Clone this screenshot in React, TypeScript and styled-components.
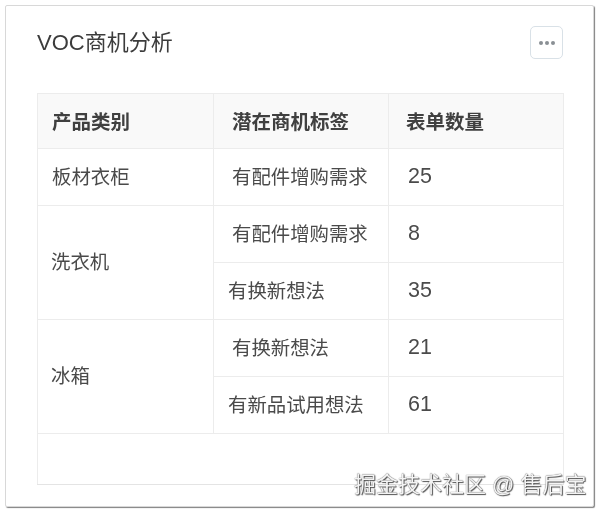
import React from "react";
import styled, { createGlobalStyle } from "styled-components";

const Global = createGlobalStyle`
  html, body { margin: 0; padding: 0; background: #fff; }
  body { width: 601px; height: 513px; overflow: hidden; font-family: "Liberation Sans", "Noto Sans CJK SC", sans-serif; }
`;

const Page = styled.div`
  position: relative;
  width: 601px;
  height: 513px;
  padding: 5px 6px 6px 5px;
  box-sizing: border-box;
  filter: blur(0.35px);
`;

const Card = styled.section`
  width: 589px;
  height: 502px;
  box-sizing: border-box;
  background: #fff;
  border: 1px solid #d8d8d8;
  border-radius: 2px;
  box-shadow: 1px 1px 1px #808080;
  padding: 20px 30px 0 31px;
  display: flex;
  flex-direction: column;
`;

const Header = styled.header`
  display: flex;
  justify-content: space-between;
  align-items: flex-start;
  height: 67px;
`;

const Title = styled.h2`
  margin: 1px 0 0;
  font-size: 22px;
  line-height: 32px;
  font-weight: 400;
  color: #3c3c3c;
`;

const MoreButton = styled.button`
  width: 33px;
  height: 33px;
  padding: 0;
  box-sizing: border-box;
  background: #fff;
  border: 1px solid #d9e1e7;
  border-radius: 5px;
  display: flex;
  align-items: center;
  justify-content: center;
`;

const Table = styled.table`
  width: 526px;
  height: 391px;
  border-collapse: collapse;
  table-layout: fixed;
`;

const HeadCell = styled.th<{ $pad: number }>`
  height: 55px;
  padding: 0 0 2px ${(p) => p.$pad}px;
  box-sizing: border-box;
  text-align: left;
  font-size: 19.5px;
  font-weight: 700;
  color: #404040;
  background: #f9f9f9;
  border: 1px solid #ececec;
`;

const Cell = styled.td<{ $pad: number }>`
  height: 57px;
  padding: 0 0 4px ${(p) => p.$pad}px;
  box-sizing: border-box;
  font-size: 19.4px;
  color: #4a4a4a;
  border: 1px solid #ececec;
`;

const CountCell = styled.td`
  height: 57px;
  padding: 0 0 2px 19px;
  box-sizing: border-box;
  font-size: 21.5px;
  color: #4a4a4a;
  border: 1px solid #ececec;
`;

const Filler = styled.td`
  height: 48px;
  border: 1px solid #ececec;
  border-bottom-color: #e4e4e4;
`;

const Watermark = styled.div`
  position: absolute;
  left: 354px;
  top: 470px;
  font-size: 22px;
  line-height: 30px;
  white-space: nowrap;
  color: #f4f4f4;
  text-shadow: 0 0 1px #333, 1px 1px 1px #555;
`;

const rows = [
  { label: "有配件增购需求", labelPad: 18, n: "25", group: { name: "板材衣柜", span: 1, pad: 14 } },
  { label: "有配件增购需求", labelPad: 18, n: "8", group: { name: "洗衣机", span: 2, pad: 13 } },
  { label: "有换新想法", labelPad: 14, n: "35" },
  { label: "有换新想法", labelPad: 18, n: "21", group: { name: "冰箱", span: 2, pad: 13 } },
  { label: "有新品试用想法", labelPad: 14, n: "61" },
];

export default function App() {
  return (
    <Page>
      <Global />
      <Card>
        <Header>
          <Title>VOC商机分析</Title>
          <MoreButton aria-label="更多">
            <svg width="18" height="6" viewBox="0 0 18 6">
              <circle cx="3" cy="3" r="2" fill="#8a8f94" />
              <circle cx="9" cy="3" r="2" fill="#8a8f94" />
              <circle cx="15" cy="3" r="2" fill="#8a8f94" />
            </svg>
          </MoreButton>
        </Header>
        <Table>
          <colgroup>
            <col width="176" />
            <col width="175" />
            <col width="175" />
          </colgroup>
          <thead>
            <tr>
              <HeadCell $pad={14}>产品类别</HeadCell>
              <HeadCell $pad={18}>潜在商机标签</HeadCell>
              <HeadCell $pad={17}>表单数量</HeadCell>
            </tr>
          </thead>
          <tbody>
            {rows.map((r, i) => (
              <tr key={i}>
                {r.group && (
                  <Cell $pad={r.group.pad} rowSpan={r.group.span}>
                    {r.group.name}
                  </Cell>
                )}
                <Cell $pad={r.labelPad}>{r.label}</Cell>
                <CountCell>{r.n}</CountCell>
              </tr>
            ))}
            <tr>
              <Filler colSpan={3} />
            </tr>
          </tbody>
        </Table>
      </Card>
      <Watermark>掘金技术社区 @ 售后宝</Watermark>
    </Page>
  );
}
